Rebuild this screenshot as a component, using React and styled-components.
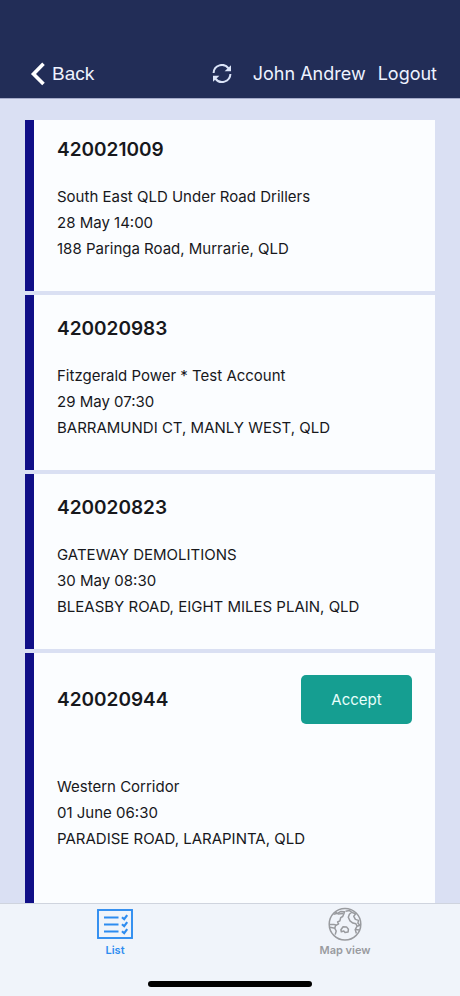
import React, { useState } from "react";
import styled, { createGlobalStyle } from "styled-components";

const GlobalStyle = createGlobalStyle`
  * {
    box-sizing: border-box;
  }
  body {
    margin: 0;
    background: #dae0f3;
    font-family: Inter, "Liberation Sans", sans-serif;
    color: #17181c;
  }
  button {
    font-family: inherit;
    border: none;
    cursor: pointer;
  }
`;

const Screen = styled.div`
  display: flex;
  flex-direction: column;
  height: 100vh;
`;

const Header = styled.header`
  display: flex;
  align-items: center;
  flex-shrink: 0;
  padding: 60px 23px 10px 30px;
  background: #222d57;
  border-bottom: 1px solid #a5abc9;
`;

const HeaderButton = styled.button`
  display: flex;
  align-items: center;
  gap: 6px;
  padding: 0;
  background: none;
  color: #eef3ff;
  font-family: ${(props) => (props.$plain ? '"Liberation Sans", sans-serif' : "inherit")};
  font-size: ${(props) => (props.$plain ? "19px" : "18px")};
  line-height: 28px;
`;

const HeaderActions = styled.div`
  display: flex;
  align-items: center;
  margin-left: auto;
  gap: 12px;
  color: #eef3ff;
  font-size: 18px;
  line-height: 28px;
`;

const UserName = styled.span`
  padding-left: 9px;
`;

const JobList = styled.main`
  display: flex;
  flex: 1;
  flex-direction: column;
  gap: 4px;
  min-height: 0;
  overflow-y: auto;
  scrollbar-width: none;
  padding: 21px 25px 0 25px;
`;

const Card = styled.article`
  flex-shrink: 0;
  padding: 22px 23px 29px;
  background: #fbfdff;
  border-left: 9px solid #100f87;

  &:first-child {
    padding-top: 18px;
  }
  &:last-child {
    flex: 1 0 auto;
  }
`;

const CardHeader = styled.div`
  display: flex;
  align-items: center;
  justify-content: space-between;
  margin-bottom: ${(props) => (props.$pending ? "50px" : "22px")};
`;

const JobNumber = styled.h2`
  margin: 0;
  font-size: 19px;
  font-weight: 600;
  line-height: 24px;
`;

const AcceptButton = styled.button`
  width: 111px;
  height: 49px;
  border-radius: 5px;
  background: #159e91;
  color: #e8fffb;
  font-size: 15px;
`;

const JobLine = styled.p`
  margin: 0;
  font-size: 15px;
  line-height: 26px;
`;

const TabBar = styled.nav`
  display: flex;
  flex-shrink: 0;
  background: #f0f4fa;
  border-top: 1px solid #cfd4de;
`;

const Tab = styled.button`
  display: flex;
  flex: 1;
  flex-direction: column;
  align-items: center;
  gap: 2px;
  padding: 3px 0 0;
  background: none;
  color: ${(props) => (props.$active ? "#2d8cf0" : "#999b9f")};
  font-size: 11px;
  font-weight: 600;
  line-height: 14px;
`;

const HomeBar = styled.div`
  display: flex;
  justify-content: center;
  flex-shrink: 0;
  padding: 24px 0 9px;
  background: #f0f4fa;

  &::after {
    content: "";
    width: 164px;
    height: 6px;
    border-radius: 3px;
    background: #000;
  }
`;

const BackIcon = () => (
  <svg width="16" height="24" viewBox="0 0 16 24" fill="none" stroke="#fff" strokeWidth="3.6" aria-hidden="true">
    <path d="M13.5 1.8 3.5 12l10 10" />
  </svg>
);

const RefreshIcon = () => (
  <svg width="20" height="20" viewBox="0 0 20 20" aria-hidden="true">
    <g fill="none" stroke="#dbe4f8" strokeWidth="2">
      <path d="M1.6 9A8.3 8.3 0 0 1 16.6 4.4" />
      <path d="M18.4 10A8.3 8.3 0 0 1 3.4 14.6" />
    </g>
    <path d="M19 1.2v6h-6.4z" fill="#dbe4f8" />
    <path d="M1 17.8v-6h6.4z" fill="#dbe4f8" />
  </svg>
);

const ListIcon = () => (
  <svg width="36" height="34" viewBox="0 0 36 34" fill="none" stroke="currentColor" aria-hidden="true">
    <rect x="1" y="3" width="34" height="28" strokeWidth="1.9" />
    <path d="M7 10.5h14.5M7 17.5h14.5M7 24.5h14.5" strokeWidth="1.9" />
    <path d="M25 10.2l2.2 2 3-4M25 17.2l2.2 2 3-4M25 24.2l2.2 2 3-4" strokeWidth="2.2" />
  </svg>
);

const GlobeIcon = () => (
  <svg width="34" height="34" viewBox="0 0 34 34" fill="none" stroke="currentColor" strokeWidth="1.5" strokeLinejoin="round" aria-hidden="true">
    <circle cx="17" cy="17.2" r="15.8" />
    <path d="M5.5 7.2l4.4-1 3-1.8 3.6.3-.6 2-1.2 2.8-2 1.2-.8 3.1-2.3 1.2 1 1.9-2.2 1.3-2.5-.8-4.4.1" />
    <path d="M7.2 4.9l3 2.1 5.3-.4M2 20.3l4.8 1 1.4 2.7-1 3.6M7.8 17.6l-1 3.7" />
    <path d="M17.5 4.2l4.1-.6 2 1.7-2.2 1.9-1.1 3 1.7 3.7 2.9 2.2 3 .6 1.2 2.5-1.9 3.4 1.2 3.9" />
    <path d="M23.6 5.3l4 1.6-1.8 2.4 1.6 3.1 3.1 1-.6 2.7 2.3 2.6M29.1 19.2l3-1M27.2 22.6l4.3.4" />
    <path d="M12.9 22.8l2.2-3 3.4.1 1.9 2.4-.3 2.7-3.1.4-1.2-1.3-2.5.6z" />
  </svg>
);

const jobs = [
  {
    id: "420021009",
    customer: "South East QLD Under Road Drillers",
    date: "28 May 14:00",
    address: "188 Paringa Road, Murrarie, QLD",
  },
  {
    id: "420020983",
    customer: "Fitzgerald Power * Test Account",
    date: "29 May 07:30",
    address: "BARRAMUNDI CT, MANLY WEST, QLD",
  },
  {
    id: "420020823",
    customer: "GATEWAY DEMOLITIONS",
    date: "30 May 08:30",
    address: "BLEASBY ROAD, EIGHT MILES PLAIN, QLD",
  },
  {
    id: "420020944",
    customer: "Western Corridor",
    date: "01 June 06:30",
    address: "PARADISE ROAD, LARAPINTA, QLD",
    pending: true,
  },
];

const App = () => {
  const [tab, setTab] = useState("list");
  const [accepted, setAccepted] = useState([]);

  const handleAccept = (id) => {
    setAccepted([...accepted, id]);
  };

  return (
    <Screen>
      <GlobalStyle />
      <Header>
        <HeaderButton type="button" $plain>
          <BackIcon />
          Back
        </HeaderButton>
        <HeaderActions>
          <HeaderButton type="button" aria-label="Refresh">
            <RefreshIcon />
          </HeaderButton>
          <UserName>John Andrew</UserName>
          <HeaderButton type="button">Logout</HeaderButton>
        </HeaderActions>
      </Header>

      <JobList>
        {jobs.map((job) => {
          const pending = job.pending && !accepted.includes(job.id);
          return (
            <Card key={job.id}>
              <CardHeader $pending={pending}>
                <JobNumber>{job.id}</JobNumber>
                {pending && (
                  <AcceptButton type="button" onClick={() => handleAccept(job.id)}>
                    Accept
                  </AcceptButton>
                )}
              </CardHeader>
              <JobLine>{job.customer}</JobLine>
              <JobLine>{job.date}</JobLine>
              <JobLine>{job.address}</JobLine>
            </Card>
          );
        })}
      </JobList>

      <TabBar>
        <Tab type="button" $active={tab === "list"} onClick={() => setTab("list")}>
          <ListIcon />
          List
        </Tab>
        <Tab type="button" $active={tab === "map"} onClick={() => setTab("map")}>
          <GlobeIcon />
          Map view
        </Tab>
      </TabBar>
      <HomeBar />
    </Screen>
  );
};

export default App;
